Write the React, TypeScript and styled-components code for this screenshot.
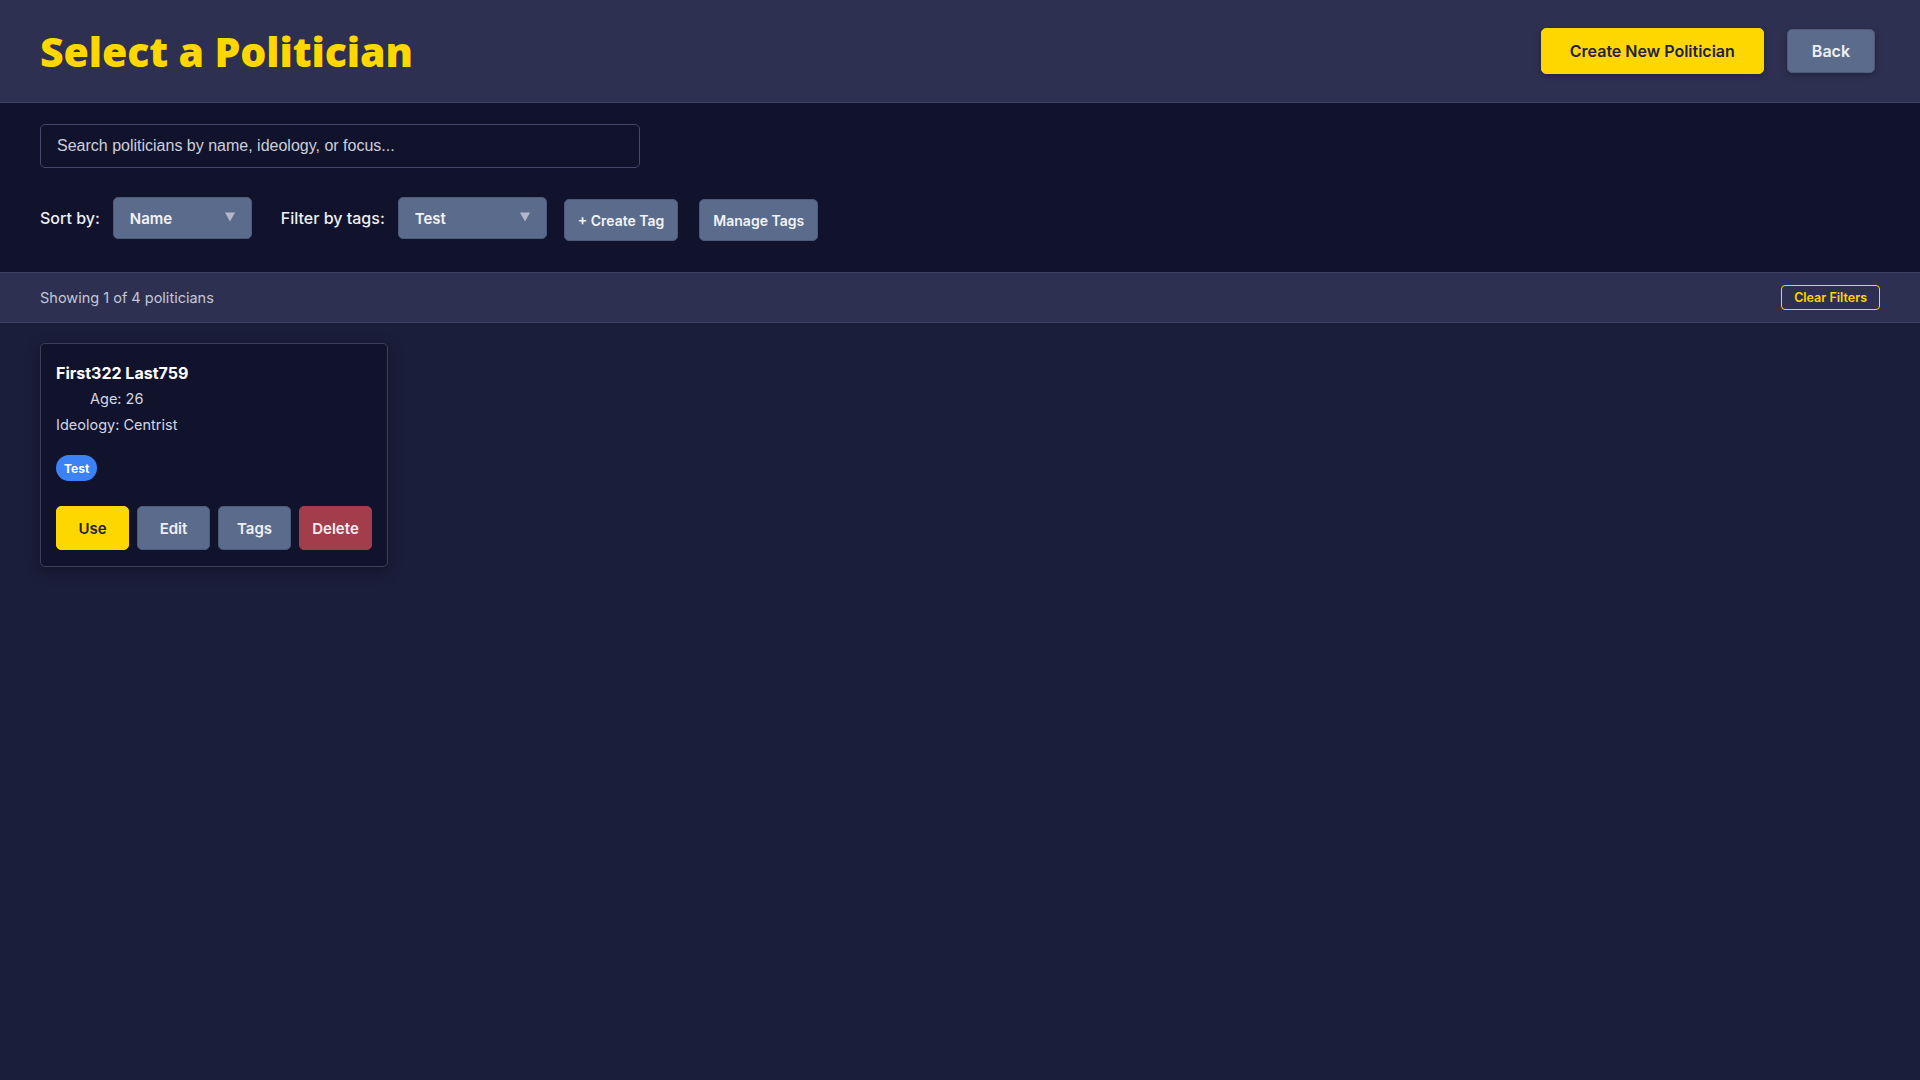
import React, { useState } from "react";
import styled, { createGlobalStyle } from "styled-components";

const yellow = "#ffd700";
const slate = "#5b6b8b";

const GlobalStyle = createGlobalStyle`
  html, body {
    margin: 0;
    padding: 0;
    background: #1b1e3b;
    font-family: Inter, "Noto Sans", "Liberation Sans", sans-serif;
  }
  * { box-sizing: border-box; }
`;

const Page = styled.div`
  min-height: 100vh;
  background: #1b1e3b;
  color: #e6e8f0;
`;

const Header = styled.header`
  height: 103px;
  display: flex;
  align-items: center;
  justify-content: space-between;
  padding: 0 45px 0 40px;
  background: #2d3050;
  border-bottom: 1px solid #3e4264;
`;

const Title = styled.h1`
  margin: 0;
  font-family: "Open Sans", Lato, sans-serif;
  font-weight: 800;
  font-size: 41px;
  letter-spacing: -0.1px;
  color: ${yellow};
`;

const HeaderActions = styled.div`
  display: flex;
  align-items: center;
  gap: 23px;
`;

const HeaderButton = styled.button<{ $primary?: boolean }>`
  height: ${(p) => (p.$primary ? "46px" : "44px")};
  padding: 0 ${(p) => (p.$primary ? "28px" : "24px")};
  border-radius: 5px;
  border: 1px solid ${(p) => (p.$primary ? yellow : "#4d5a78")};
  background: ${(p) => (p.$primary ? yellow : slate)};
  color: ${(p) => (p.$primary ? "#1f2242" : "#eef0f6")};
  font-family: Inter, sans-serif;
  font-weight: 600;
  font-size: 16px;
  box-shadow: 0 2px 6px rgba(0, 0, 0, 0.25);
  cursor: pointer;
`;

const Controls = styled.section`
  background: #11132c;
  padding: 21px 40px 31px;
`;

const SearchInput = styled.input`
  display: block;
  width: 600px;
  height: 44px;
  padding: 0 16px;
  background: #11132c;
  border: 1px solid #45496a;
  border-radius: 5px;
  color: #e6e8f0;
  font-family: "Liberation Sans", Arial, sans-serif;
  font-size: 16px;
  outline: none;

  &::placeholder {
    color: #cdd0dc;
  }
`;

const FilterRow = styled.div`
  display: flex;
  align-items: flex-start;
  margin-top: 29px;
  height: 44px;
`;

const Label = styled.label<{ $ml?: number }>`
  height: 42px;
  display: flex;
  align-items: center;
  margin-left: ${(p) => p.$ml ?? 0}px;
  margin-right: 13px;
  font-size: 16px;
  font-weight: 500;
  color: #eef0f6;
`;

const SelectWrap = styled.div<{ $w: number }>`
  position: relative;
  width: ${(p) => p.$w}px;
  height: 42px;
`;

const Select = styled.select`
  appearance: none;
  width: 100%;
  height: 100%;
  padding: 0 34px 0 16px;
  background: ${slate};
  border: 1px solid #4d5a78;
  border-radius: 5px;
  color: #f2f3f8;
  font-family: Inter, sans-serif;
  font-size: 15px;
  font-weight: 600;
  outline: none;
`;

const Arrow = styled.span`
  position: absolute;
  right: 16px;
  top: 14px;
  pointer-events: none;
  display: flex;
`;

const ToolButton = styled.button<{ $ml: number }>`
  height: 42px;
  margin-top: 2px;
  margin-left: ${(p) => p.$ml}px;
  padding: 0 13px;
  background: ${slate};
  border: 1px solid #4d5a78;
  border-radius: 5px;
  color: #f2f3f8;
  font-family: Inter, sans-serif;
  font-size: 14px;
  font-weight: 600;
  cursor: pointer;
`;

const StatusBar = styled.div`
  height: 51px;
  display: flex;
  align-items: center;
  justify-content: space-between;
  padding: 0 40px;
  background: #2d3050;
  border-top: 1px solid #3e4264;
  border-bottom: 1px solid #3e4264;
  font-size: 14.5px;
  color: #c3c7d8;
`;

const ClearButton = styled.button`
  height: 25px;
  padding: 0 12px;
  background: transparent;
  border: 1px solid ${yellow};
  border-radius: 4px;
  color: ${yellow};
  font-family: Inter, sans-serif;
  font-size: 12.5px;
  font-weight: 600;
  cursor: pointer;
`;

const Main = styled.main`
  padding: 20px 40px;
  display: grid;
  grid-template-columns: repeat(auto-fill, 348px);
  gap: 20px;
`;

const Card = styled.div`
  background: #11132c;
  border: 1px solid #3b3e5e;
  border-radius: 5px;
  padding: 17px 15px 16px 15px;
  box-shadow: 0 4px 14px rgba(0, 0, 0, 0.35);
`;

const Name = styled.div`
  font-size: 16px;
  font-weight: 700;
  line-height: 24px;
  color: #ffffff;
`;

const Info = styled.div<{ $indent?: boolean; $mt: number }>`
  margin-top: ${(p) => p.$mt}px;
  padding-left: ${(p) => (p.$indent ? 34 : 0)}px;
  font-size: 14.5px;
  line-height: 22px;
  color: #d4d7e4;
`;

const TagList = styled.div`
  display: flex;
  gap: 6px;
  margin-top: 19px;
`;

const Tag = styled.span<{ $color: string }>`
  height: 26px;
  padding: 0 8px;
  display: inline-flex;
  align-items: center;
  border-radius: 13px;
  background: ${(p) => p.$color};
  color: #fff;
  font-size: 12px;
  font-weight: 700;
`;

const CardActions = styled.div`
  display: grid;
  grid-template-columns: repeat(4, 1fr);
  gap: 8px;
  margin-top: 25px;
`;

const variants = {
  use: { bg: yellow, border: yellow, fg: "#1f2242" },
  neutral: { bg: slate, border: "#4d5a78", fg: "#eef0f6" },
  danger: { bg: "#a23d4c", border: "#a23d4c", fg: "#f6eef0" },
};

const CardButton = styled.button<{ $variant: keyof typeof variants }>`
  height: 44px;
  border-radius: 5px;
  border: 1px solid ${(p) => variants[p.$variant].border};
  background: ${(p) => variants[p.$variant].bg};
  color: ${(p) => variants[p.$variant].fg};
  font-family: Inter, sans-serif;
  font-size: 15px;
  font-weight: 600;
  cursor: pointer;
`;

const DownArrow = () => (
  <Arrow>
    <svg width="12" height="12" viewBox="0 0 12 12">
      <path d="M1 1.5h10L6 10.5z" fill="#b3b9c9" />
    </svg>
  </Arrow>
);

const politicians = [
  { id: 1, first: "First322", last: "Last759", age: 26, ideology: "Centrist", tags: ["Test"] },
];

export default function App() {
  const [query, setQuery] = useState("");

  return (
    <Page>
      <GlobalStyle />
      <Header>
        <Title>Select a Politician</Title>
        <HeaderActions>
          <HeaderButton $primary>Create New Politician</HeaderButton>
          <HeaderButton>Back</HeaderButton>
        </HeaderActions>
      </Header>

      <Controls>
        <SearchInput
          value={query}
          onChange={(e) => setQuery(e.target.value)}
          placeholder="Search politicians by name, ideology, or focus..."
        />
        <FilterRow>
          <Label>Sort by:</Label>
          <SelectWrap $w={139}>
            <Select defaultValue="name">
              <option value="name">Name</option>
              <option value="age">Age</option>
            </Select>
            <DownArrow />
          </SelectWrap>
          <Label $ml={29}>Filter by tags:</Label>
          <SelectWrap $w={149}>
            <Select defaultValue="test">
              <option value="test">Test</option>
            </Select>
            <DownArrow />
          </SelectWrap>
          <ToolButton $ml={17}>+ Create Tag</ToolButton>
          <ToolButton $ml={21}>Manage Tags</ToolButton>
        </FilterRow>
      </Controls>

      <StatusBar>
        <span>Showing 1 of 4 politicians</span>
        <ClearButton>Clear Filters</ClearButton>
      </StatusBar>

      <Main>
        {politicians.map((p) => (
          <Card key={p.id}>
            <Name>
              {p.first} {p.last}
            </Name>
            <Info $indent $mt={3}>Age: {p.age}</Info>
            <Info $mt={4}>Ideology: {p.ideology}</Info>
            <TagList>
              {p.tags.map((t) => (
                <Tag key={t} $color="#3b82f6">
                  {t}
                </Tag>
              ))}
            </TagList>
            <CardActions>
              <CardButton $variant="use">Use</CardButton>
              <CardButton $variant="neutral">Edit</CardButton>
              <CardButton $variant="neutral">Tags</CardButton>
              <CardButton $variant="danger">Delete</CardButton>
            </CardActions>
          </Card>
        ))}
      </Main>
    </Page>
  );
}
